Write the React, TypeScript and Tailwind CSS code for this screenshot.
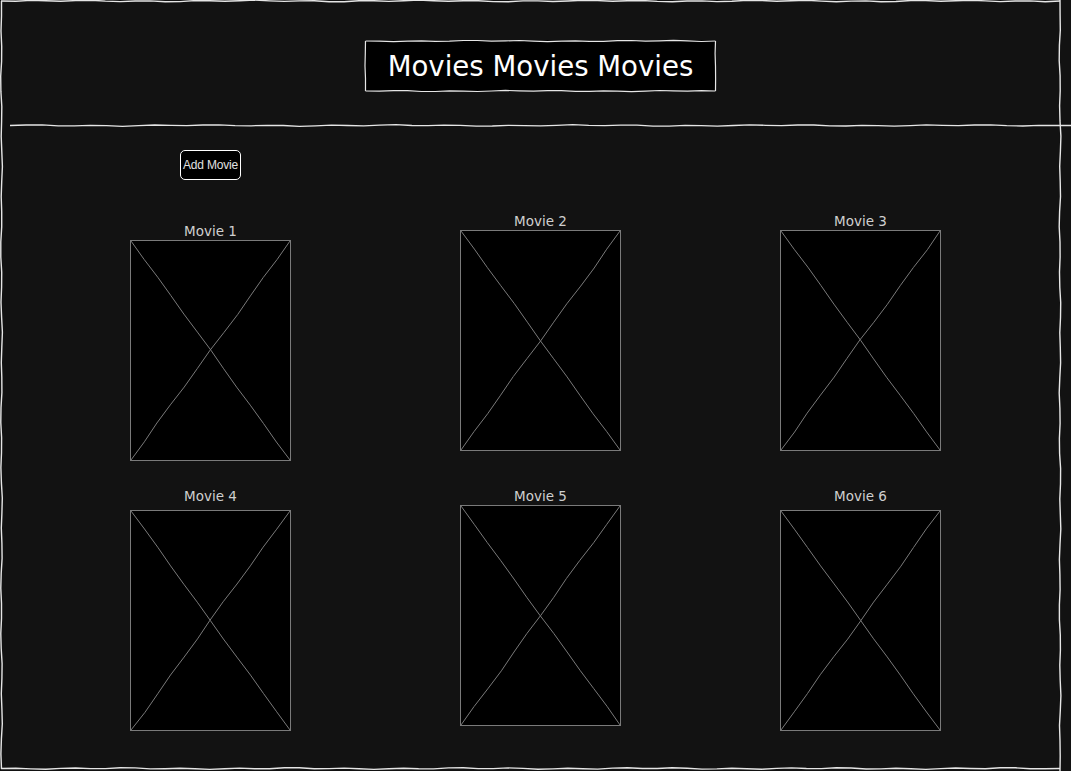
import React from "react";

function wobble(x1: number, y1: number, x2: number, y2: number, amp: number, seed: number, step = 14) {
  const dx = x2 - x1;
  const dy = y2 - y1;
  const len = Math.sqrt(dx * dx + dy * dy);
  const n = Math.max(2, Math.round(len / step));
  const nx = -dy / len;
  const ny = dx / len;
  let d = `M${x1.toFixed(1)} ${y1.toFixed(1)}`;
  for (let i = 1; i <= n; i++) {
    const t = i / n;
    const off = i === n ? 0 : amp * (Math.sin(i * 1.7 + seed) * 0.6 + Math.sin(i * 0.53 + seed * 2.3) * 0.4);
    const x = x1 + dx * t + nx * off;
    const y = y1 + dy * t + ny * off;
    d += ` L${x.toFixed(1)} ${y.toFixed(1)}`;
  }
  return d;
}

function Placeholder({ seed }: { seed: number }) {
  return (
    <div className="w-[161px] h-[221px] bg-black border border-[#7a7a7a]">
      <svg width="159" height="219" viewBox="0 0 159 219" className="block">
        <path d={wobble(0, 0, 159, 219, 0.5, seed, 22)} stroke="#7a7a7a" strokeWidth="1" fill="none" />
        <path d={wobble(159, 0, 0, 219, 0.9, seed + 3, 22)} stroke="#7a7a7a" strokeWidth="1" fill="none" />
      </svg>
    </div>
  );
}

function Card({ title, labelTop, gap, left, seed }: { title: string; labelTop: number; gap: number; left: number; seed: number }) {
  return (
    <div className="flex flex-col items-center w-[161px]" style={{ marginLeft: left, marginTop: labelTop }}>
      <div className="h-[16px] leading-[16px] text-[13.5px] text-[#cfcfcf]" style={{ fontFamily: '"DejaVu Sans", Verdana, sans-serif' }}>
        {title}
      </div>
      <div style={{ marginTop: gap }}>
        <Placeholder seed={seed} />
      </div>
    </div>
  );
}

export default function App() {
  return (
    <div className="relative w-[1071px] h-[771px] overflow-hidden bg-[#121212]">
      <div className="flex flex-col w-[1061px]">
        <header className="h-[124px] pt-[40px] pl-[365px]">
          <div className="w-[351px] h-[51px] bg-black flex items-center justify-center pt-[2px]">
            <span className="text-[27.6px] text-white leading-none" style={{ fontFamily: '"DejaVu Sans", Verdana, sans-serif' }}>
              Movies Movies Movies
            </span>
          </div>
        </header>
        <svg width="1071" height="3" className="block shrink-0">
          <path d={wobble(10, 1.5, 1071, 1.5, 0.8, 2, 16)} stroke="#e6e6e6" strokeWidth="1.3" fill="none" />
        </svg>
        <div className="pl-[180px] pt-[23px]">
          <button
            className="w-[61px] h-[30px] rounded-[5px] border border-white bg-black text-[12px] text-[#e0e0e0] flex items-center justify-center tracking-[-0.2px]"
            style={{ fontFamily: '"Liberation Sans", Arial, sans-serif' }}
          >
            Add Movie
          </button>
        </div>
        <div className="flex items-start mt-[33px]">
          <Card title="Movie 1" labelTop={10} gap={1} left={130} seed={1} />
          <Card title="Movie 2" labelTop={0} gap={1} left={169} seed={4} />
          <Card title="Movie 3" labelTop={0} gap={1} left={159} seed={7} />
        </div>
        <div className="flex items-start mt-[27px]">
          <Card title="Movie 4" labelTop={0} gap={6} left={130} seed={2} />
          <Card title="Movie 5" labelTop={0} gap={1} left={169} seed={5} />
          <Card title="Movie 6" labelTop={0} gap={6} left={159} seed={9} />
        </div>
      </div>

      <svg className="absolute inset-0 pointer-events-none" width="1071" height="771">
        <path d={wobble(1, 1, 1060, 1, 0.9, 1, 15)} stroke="#e6e6e6" strokeWidth="1.4" fill="none" />
        <path d={wobble(1.5, 1, 1.5, 769, 0.9, 5, 15)} stroke="#e6e6e6" strokeWidth="1.4" fill="none" />
        <path d={wobble(1060, 0, 1060, 771, 0.9, 8, 15)} stroke="#e6e6e6" strokeWidth="1.4" fill="none" />
        <path d={wobble(1, 768.5, 1060, 768.5, 0.9, 3, 15)} stroke="#e6e6e6" strokeWidth="1.4" fill="none" />
        <path d={wobble(365.5, 41, 715.5, 41, 0.7, 11, 14)} stroke="#e6e6e6" strokeWidth="1.2" fill="none" />
        <path d={wobble(365.5, 91, 715.5, 91, 0.7, 13, 14)} stroke="#e6e6e6" strokeWidth="1.2" fill="none" />
        <path d={wobble(365.5, 41, 365.5, 91, 0.6, 17, 12)} stroke="#e6e6e6" strokeWidth="1.2" fill="none" />
        <path d={wobble(715.5, 41, 715.5, 91, 0.6, 19, 12)} stroke="#e6e6e6" strokeWidth="1.2" fill="none" />
      </svg>
    </div>
  );
}
